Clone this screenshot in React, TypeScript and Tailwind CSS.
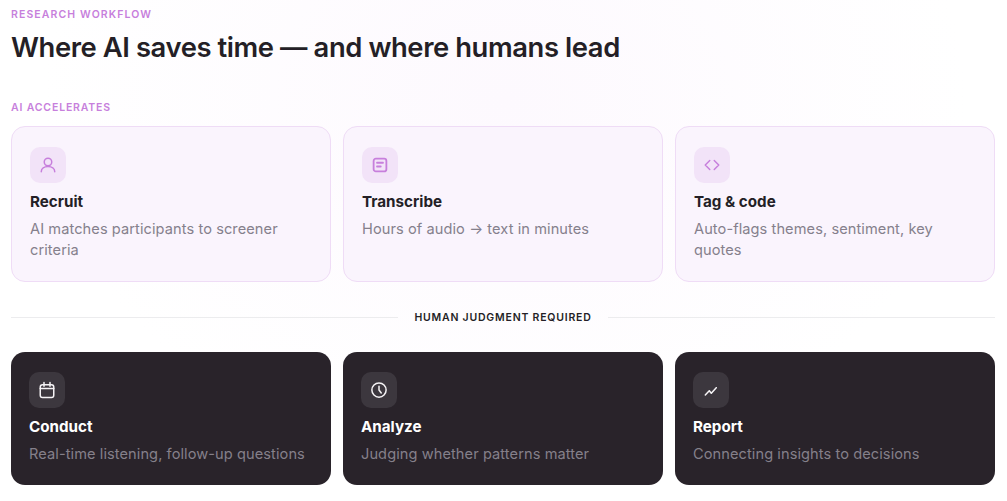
import React from "react";

const F = "[font-family:Inter,'Liberation_Sans',sans-serif]";

const stroke = {
  fill: "none",
  stroke: "currentColor",
  strokeWidth: 2,
  strokeLinecap: "round" as const,
  strokeLinejoin: "round" as const,
};

const User = () => (
  <svg width="18" height="18" viewBox="0 0 24 24" {...stroke}>
    <circle cx="12" cy="8" r="5" />
    <path d="M3 21c0-4.500 4-7 9-7s9 2.500 9 7" />
  </svg>
);
const Doc = () => (
  <svg width="18" height="18" viewBox="0 0 24 24" {...stroke} strokeWidth={2.4}>
    <rect x="3.500" y="3.500" width="17" height="17" rx="3" />
    <path d="M8 9h8M8 14h5" />
  </svg>
);
const Code = () => (
  <svg width="18" height="18" viewBox="0 0 24 24" {...stroke}>
    <path d="M9 6l-6 6 6 6M15 6l6 6-6 6" />
  </svg>
);
const Cal = () => (
  <svg width="18" height="18" viewBox="0 0 24 24" {...stroke}>
    <rect x="3" y="5" width="18" height="17" rx="3" />
    <path d="M8 2v5M16 2v5M3 10h18" />
  </svg>
);
const Clock = () => (
  <svg width="18" height="18" viewBox="0 0 24 24" {...stroke}>
    <circle cx="12" cy="12" r="9.500" />
    <path d="M12 7v5l3 4" />
  </svg>
);
const Trend = () => (
  <svg width="18" height="18" viewBox="0 0 24 24" {...stroke}>
    <path d="M4.400 18.700l5.300-5.800 2.700 3.500 6.600-7.500" />
  </svg>
);

const light = [
  { icon: <User />, t: "Recruit", d: "AI matches participants to screener criteria" },
  { icon: <Doc />, t: "Transcribe", d: "Hours of audio → text in minutes" },
  { icon: <Code />, t: "Tag & code", d: "Auto-flags themes, sentiment, key quotes" },
];
const dark = [
  { icon: <Cal />, t: "Conduct", d: "Real-time listening, follow-up questions" },
  { icon: <Clock />, t: "Analyze", d: "Judging whether patterns matter" },
  { icon: <Trend />, t: "Report", d: "Connecting insights to decisions" },
];

export default function App() {
  return (
    <div className={`${F} min-h-[501px] bg-[radial-gradient(ellipse_at_50%_20%,#fdf9fe_0%,#ffffff_65%)] pl-[11px] pr-[12px] pt-[8px] pb-[16px] text-[#241f26]`}>
      <div className="text-[10.5px] leading-[13px] font-semibold tracking-[0.105em] text-[#c77fdc]">RESEARCH WORKFLOW</div>
      <h1 className="mt-[9px] text-[27.4px] leading-[34px] font-semibold tracking-[-0.015em]">Where AI saves time — and where humans lead</h1>
      <div className="mt-[37px] text-[10.5px] leading-[13px] font-semibold tracking-[0.08em] text-[#c77fdc]">AI ACCELERATES</div>
      <div className="mt-[12px] grid grid-cols-3 gap-[12px]">
        {light.map((c) => (
          <div key={c.t} className="h-[156px] rounded-[14px] border border-[#efdcf6] bg-[#faf4fd] px-[18px] pt-[20px]">
            <div className="flex size-[36px] items-center justify-center rounded-[10px] bg-[#f2e3f8] text-[#c77fdc]">{c.icon}</div>
            <div className="mt-[9px] text-[15.2px] leading-[20px] font-bold">{c.t}</div>
            <div className="mt-[7px] text-[14.6px] leading-[21px] tracking-[0.08px] text-[#85808c]">{c.d}</div>
          </div>
        ))}
      </div>
      <div className="mt-[29px] flex items-center">
        <div className="h-px flex-1 bg-[#ececee]" />
        <div className="px-[16px] text-[10.5px] leading-[13px] font-semibold tracking-[0.075em] text-[#241f26]">HUMAN JUDGMENT REQUIRED</div>
        <div className="h-px flex-1 bg-[#ececee]" />
      </div>
      <div className="mt-[28px] grid grid-cols-3 gap-[12px]">
        {dark.map((c) => (
          <div key={c.t} className="h-[133px] rounded-[14px] bg-[#29232a] px-[18px] pt-[20px]">
            <div className="flex size-[36px] items-center justify-center rounded-[10px] bg-[#3c373e] text-[#f5f3f5]">{c.icon}</div>
            <div className="mt-[9px] text-[15.2px] leading-[20px] font-bold text-white">{c.t}</div>
            <div className="mt-[7px] text-[14.6px] leading-[21px] tracking-[0.08px] text-[#85808a]">{c.d}</div>
          </div>
        ))}
      </div>
    </div>
  );
}
